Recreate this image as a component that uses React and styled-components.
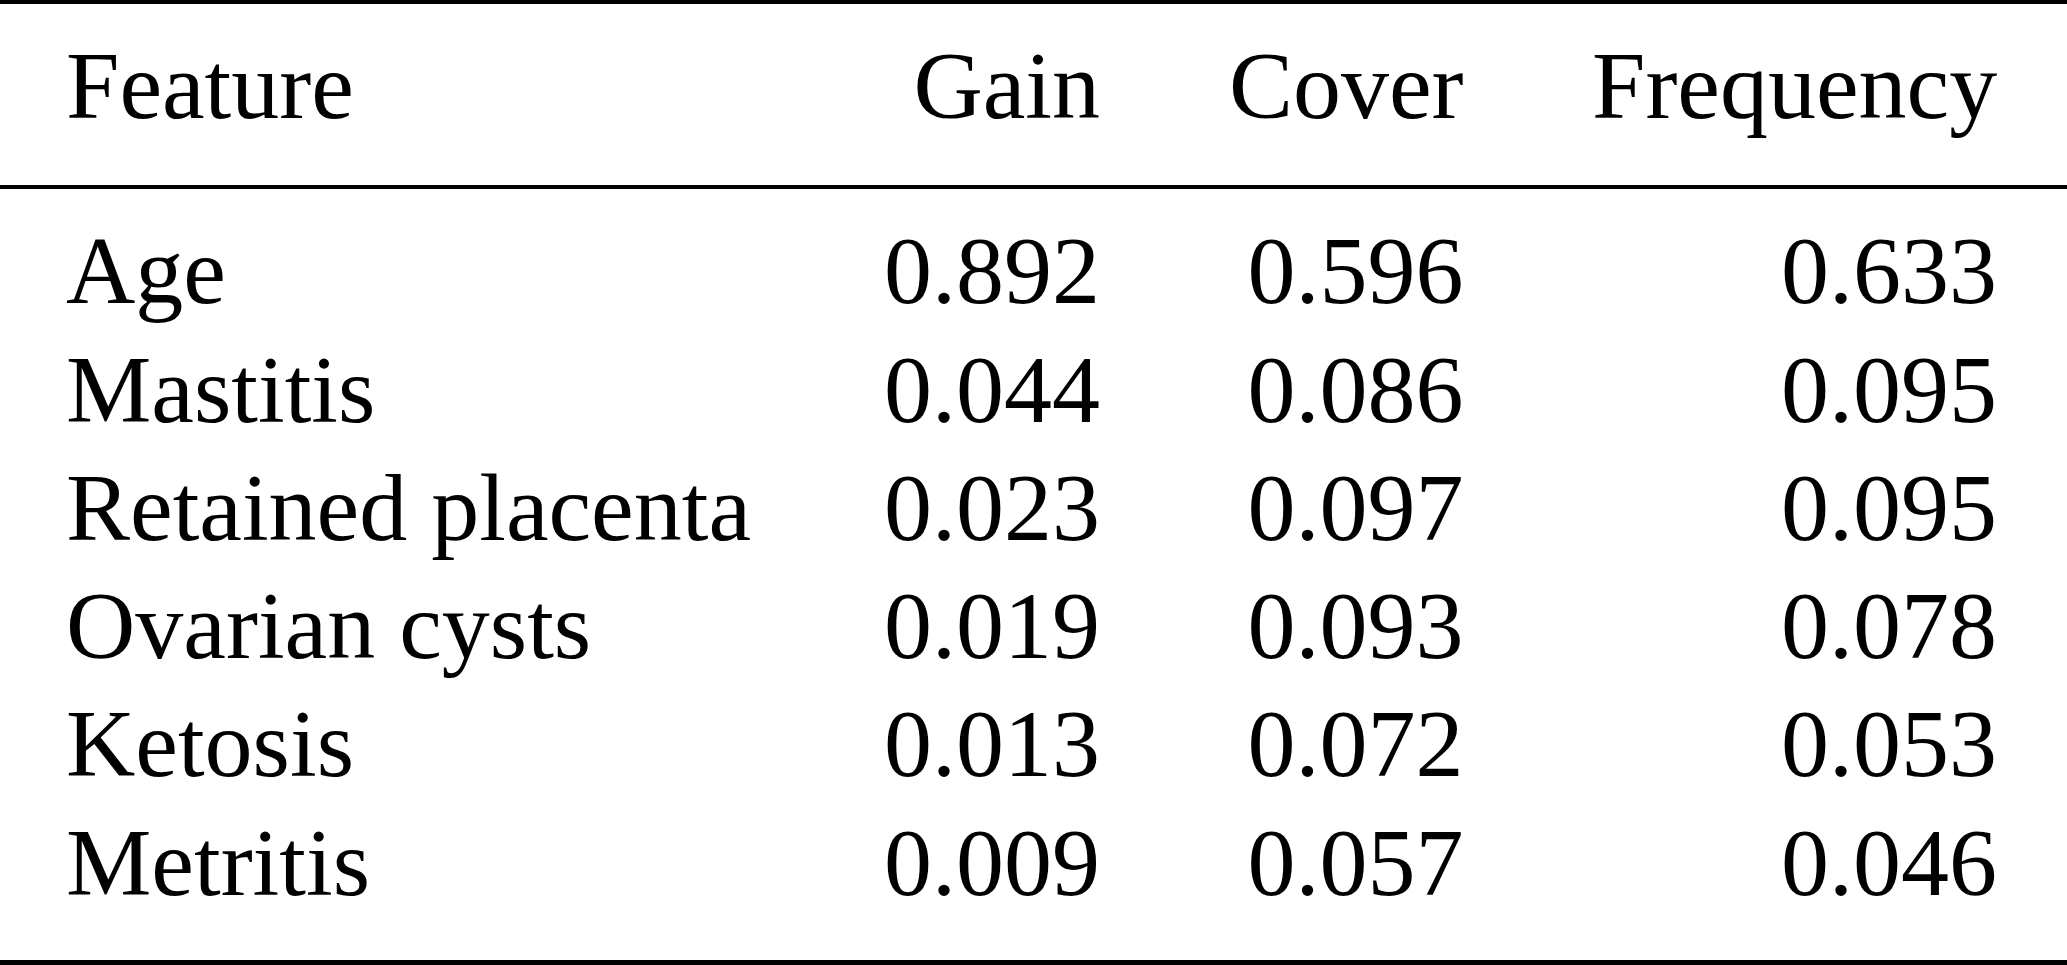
import styled, { createGlobalStyle } from "styled-components";

const GlobalStyle = createGlobalStyle`
  html, body {
    margin: 0;
    padding: 0;
    background: #fff;
  }
  body {
    font-family: "Liberation Serif", "Times New Roman", serif;
    color: #000;
  }
`;

const COLUMNS = "1fr 216px 235px 405px";

const Table = styled.div`
  width: 2067px;
  border-top: 4px solid #000;
  border-bottom: 5px solid #000;
  font-size: 96px;
  line-height: 118.25px;
  box-sizing: border-box;
`;

const Head = styled.div`
  display: grid;
  grid-template-columns: ${COLUMNS};
  column-gap: 128.5px;
  padding: 23px 70px 40px 66px;
  border-bottom: 4px solid #000;
`;

const Body = styled.div`
  display: grid;
  grid-template-columns: ${COLUMNS};
  column-gap: 128.5px;
  padding: 23px 70px 38.5px 66px;
`;

const Cell = styled.div`
  text-align: ${(p) => (p.$numeric ? "right" : "left")};
  white-space: nowrap;
`;

const header = ["Feature", "Gain", "Cover", "Frequency"];

const rows = [
  ["Age", "0.892", "0.596", "0.633"],
  ["Mastitis", "0.044", "0.086", "0.095"],
  ["Retained placenta", "0.023", "0.097", "0.095"],
  ["Ovarian cysts", "0.019", "0.093", "0.078"],
  ["Ketosis", "0.013", "0.072", "0.053"],
  ["Metritis", "0.009", "0.057", "0.046"],
];

const App = () => {
  return (
    <>
      <GlobalStyle />
      <Table>
        <Head>
          {header.map((h, i) => (
            <Cell key={h} $numeric={i > 0}>
              {h}
            </Cell>
          ))}
        </Head>
        <Body>
          {rows.map((row) =>
            row.map((value, i) => (
              <Cell key={row[0] + i} $numeric={i > 0}>
                {value}
              </Cell>
            ))
          )}
        </Body>
      </Table>
    </>
  );
};

export default App;
